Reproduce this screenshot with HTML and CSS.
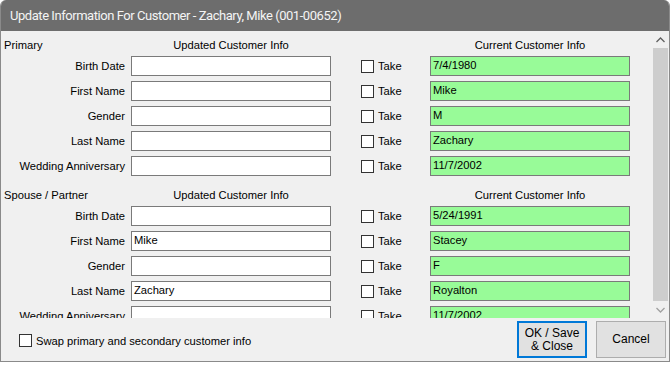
FILE: index.html
```html
<!DOCTYPE html>
<html>
<head>
<meta charset="utf-8">
<link rel="stylesheet" href="styles.css">
</head>
<body>
<div class="window">
  <div class="titlebar">Update Information For Customer - Zachary, Mike (001-00652)</div>
  <div class="main">
    <div class="scroller">
      <div class="section">
        <div class="hdr-left">Primary</div>
        <div class="hdr-col">Updated Customer Info</div>
        <div></div><div></div>
        <div class="hdr-col">Current Customer Info</div>

        <div class="lbl">Birth Date</div><div class="box"></div><div></div><div class="take"><span class="cb"></span>Take</div><div class="box green">7/4/1980</div>
        <div class="lbl">First Name</div><div class="box"></div><div></div><div class="take"><span class="cb"></span>Take</div><div class="box green">Mike</div>
        <div class="lbl">Gender</div><div class="box"></div><div></div><div class="take"><span class="cb"></span>Take</div><div class="box green">M</div>
        <div class="lbl">Last Name</div><div class="box"></div><div></div><div class="take"><span class="cb"></span>Take</div><div class="box green">Zachary</div>
        <div class="lbl">Wedding Anniversary</div><div class="box"></div><div></div><div class="take"><span class="cb"></span>Take</div><div class="box green">11/7/2002</div>
      </div>
      <div class="section">
        <div class="hdr-left">Spouse / Partner</div>
        <div class="hdr-col">Updated Customer Info</div>
        <div></div><div></div>
        <div class="hdr-col">Current Customer Info</div>

        <div class="lbl">Birth Date</div><div class="box"></div><div></div><div class="take"><span class="cb"></span>Take</div><div class="box green">5/24/1991</div>
        <div class="lbl">First Name</div><div class="box">Mike</div><div></div><div class="take"><span class="cb"></span>Take</div><div class="box green">Stacey</div>
        <div class="lbl">Gender</div><div class="box"></div><div></div><div class="take"><span class="cb"></span>Take</div><div class="box green">F</div>
        <div class="lbl">Last Name</div><div class="box">Zachary</div><div></div><div class="take"><span class="cb"></span>Take</div><div class="box green">Royalton</div>
        <div class="lbl">Wedding Anniversary</div><div class="box"></div><div></div><div class="take"><span class="cb"></span>Take</div><div class="box green">11/7/2002</div>
      </div>
    </div>
    <div class="scrollbar">
      <div class="arrow"><svg width="9" height="6" viewBox="0 0 9 6"><path d="M0.5 5 L4.5 1 L8.5 5" fill="none" stroke="#606060" stroke-width="1.3"/></svg></div>
      <div class="thumb"></div>
      <div class="arrow"><svg width="9" height="6" viewBox="0 0 9 6"><path d="M0.5 1 L4.5 5 L8.5 1" fill="none" stroke="#a0a0a0" stroke-width="1.3"/></svg></div>
    </div>
  </div>
  <div class="footer">
    <div class="swap"><span class="cb"></span>Swap primary and secondary customer info</div>
    <div class="buttons">
      <div class="btn default">OK / Save<br>&amp; Close</div>
      <div class="btn">Cancel</div>
    </div>
  </div>
</div>
</body>
</html>
```

FILE: styles.css
```css
html, body {
  margin: 0;
  padding: 0;
  background: #ffffff;
}
body {
  font-family: "Liberation Sans", Arial, sans-serif;
  font-size: 11.2px;
  color: #000;
}
.window {
  width: 670px;
  height: 362px;
  background: #f0f0f0;
  border-left: 1px solid #8a8a8a;
  border-right: 1px solid #8a8a8a;
  border-bottom: 1px solid #8a8a8a;
  border-radius: 6px 6px 0 0;
  box-sizing: border-box;
  display: flex;
  flex-direction: column;
  overflow: hidden;
}
.titlebar {
  height: 31px;
  flex: none;
  background: #6d6d6d;
  color: #f4f4f4;
  font-family: Roboto, "Liberation Sans", sans-serif;
  font-size: 13px;
  letter-spacing: -0.45px;
  line-height: 31px;
  padding-left: 9px;
}
.main {
  height: 287px;
  flex: none;
  display: flex;
}
.scroller {
  flex: 1;
  overflow: hidden;
}
.section {
  display: grid;
  grid-template-columns: 130px 200px 30px 69px 200px;
  grid-template-rows: 20px repeat(5, 20px);
  row-gap: 5px;
  height: 150px;
  align-content: start;
  align-items: center;
}
.hdr-left {
  align-self: end;
  padding-left: 3px;
  line-height: 12px;
  white-space: nowrap;
}
.hdr-col {
  align-self: end;
  text-align: center;
  line-height: 12px;
}
.lbl {
  text-align: right;
  padding-right: 6px;
  white-space: nowrap;
}
.box {
  height: 20px;
  box-sizing: border-box;
  border: 1px solid #7a7a7a;
  background: #fff;
  padding-left: 2px;
  line-height: 17px;
}
.box.green {
  background: #98fb98;
}
.take {
  display: flex;
  align-items: center;
}
.cb {
  display: inline-block;
  width: 13px;
  height: 13px;
  box-sizing: border-box;
  border: 1px solid #333;
  background: #fff;
  margin-right: 4px;
  flex: none;
}
.scrollbar {
  width: 17px;
  flex: none;
  background: #f0f0f0;
  display: flex;
  flex-direction: column;
}
.arrow {
  height: 17px;
  display: flex;
  align-items: center;
  justify-content: center;
  flex: none;
}
.thumb {
  flex: 1;
  background: #cdcdcd;
  margin: 0 1px;
}
.footer {
  flex: 1;
  display: flex;
  align-items: flex-start;
  justify-content: space-between;
}
.swap {
  display: flex;
  align-items: center;
  margin-top: 16px;
  margin-left: 18px;
}
.buttons {
  display: flex;
  gap: 9px;
  margin-top: 3px;
  margin-right: 3px;
}
.btn {
  width: 70px;
  height: 37px;
  box-sizing: border-box;
  border: 1px solid #adadad;
  background: #e1e1e1;
  display: flex;
  align-items: center;
  justify-content: center;
  text-align: center;
  line-height: 13px;
  font-size: 12px;
}
.btn.default {
  border: 2px solid #0078d7;
}
```
